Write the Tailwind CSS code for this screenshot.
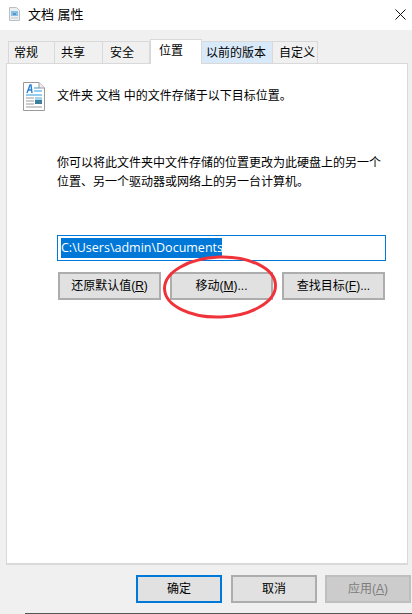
<!DOCTYPE html>
<html lang="zh-CN">
<head>
<meta charset="utf-8">
<script src="https://cdn.jsdelivr.net/npm/@tailwindcss/browser@4"></script>
</head>
<body class="relative w-[412px] h-[614px] overflow-hidden bg-[#f0f0f0] text-[12px] text-black font-['Liberation_Sans','Noto_Sans_CJK_SC',sans-serif]">
  <header class="h-[30px] bg-white flex items-center pl-[9px] pr-[6px] pb-[2px]">
    <svg class="w-[11px] h-[14px] mr-[8px]" viewBox="0 0 11 14"><path d="M.5.500H7.500L10.500 3.500V13.500H.5Z" fill="#eceef0" stroke="#bcbfc2"/><path d="M2 4h7v5H2z" fill="#86c1ea"/><path d="M4 7h3" stroke="#38668f"/><path d="M2 11h7" stroke="#c5c9cc"/></svg>
    <span class="text-[13px] leading-none">文档 属性</span>
    <svg class="ml-auto w-[11px] h-[11px]" viewBox="0 0 11 11"><path d="M.5.500l10 10M10.500.500l-10 10" stroke="#111" fill="none"/></svg>
  </header>

  <div class="pl-[8px] pt-[9px] h-[33px] flex items-end">
    <div class="w-[47px] h-[22px] bg-[#f0f0f0] border border-b-0 border-[#d9d9d9] flex items-center pl-[5px]">常规</div>
    <div class="w-[48px] h-[22px] bg-[#f0f0f0] border border-l-0 border-b-0 border-[#d9d9d9] flex items-center pl-[6px]">共享</div>
    <div class="w-[47px] h-[22px] bg-[#f0f0f0] border border-l-0 border-b-0 border-[#d9d9d9] flex items-center pl-[7px]">安全</div>
    <div class="relative z-10 w-[52px] h-[25px] -mb-px bg-white border border-b-0 border-[#d9d9d9] flex items-center pl-[8px] pb-[2px]">位置</div>
    <div class="w-[70px] h-[22px] bg-[#d8eaf9] border-t border-[#d9d9d9] flex items-center pl-[4px]">以前的版本</div>
    <div class="w-[46px] h-[22px] bg-[#f0f0f0] border border-b-0 border-[#d9d9d9] flex items-center pl-[6px]">自定义</div>
  </div>

  <main class="ml-[6px] w-[402px] h-[502px] bg-white border-2 border-[#d9d9d9] border-l-[1px] border-r-[1px] border-t-[1px] pl-[50px] pr-[21px]">
    <div class="flex items-center h-[32px] mt-[16px] -ml-[34px]">
      <svg class="w-[22px] h-[29px] mr-[12px]" viewBox="0 0 22 29">
        <path d="M.5.500H16L21.500 6V28.500H.5Z" fill="#fff" stroke="#9a9a9a"/>
        <path d="M16 .5V6H21.500" fill="#eee" stroke="#9a9a9a"/>
        <path d="M4 11 7 3h1l1 8M5 8h3" fill="none" stroke="#2a7fd5" stroke-width="1.400"/>
        <path d="M11 6h5M11 9h8M3 13h16" stroke="#2a9be0"/>
        <path d="M3 16h8M3 19h8M3 22h8M3 25h16" stroke="#9a9a9a"/>
        <path d="M12 15h7v7h-7z" fill="#3e7f9e"/><path d="M12 15h7v3h-7z" fill="#a8d4ee"/>
      </svg>
      <p>文件夹 文档 中的文件存储于以下目标位置。</p>
    </div>
    <p class="mt-[42px] leading-[19px]">你可以将此文件夹中文件存储的位置更改为此硬盘上的另一个<br>位置、另一个驱动器或网络上的另一台计算机。</p>
    <div class="mt-[43px] h-[26px] w-[329px] border border-[#0078d7] flex items-center pl-[3px]">
      <span class="bg-[#0078d7] text-white h-[20px] leading-[20px] text-[12.500px] font-['Open_Sans','Noto_Sans',sans-serif] w-[161px] whitespace-nowrap overflow-hidden">C:\Users\admin\Documents</span>
    </div>
    <div class="mt-[11px] flex gap-[9px] w-[328px] ml-px">
      <button class="w-[103px] h-[28px] bg-[#e1e1e1] border-2 border-[#adadad]">还原默认值(<u>R</u>)</button>
      <button class="w-[103px] h-[28px] bg-[#e1e1e1] border-2 border-[#adadad]">移动(<u>M</u>)...</button>
      <button class="w-[103px] h-[28px] bg-[#e1e1e1] border-2 border-[#adadad]">查找目标(<u>F</u>)...</button>
    </div>
  </main>

  <footer class="mt-[10px] flex gap-[9px] pl-[136px]">
    <button class="w-[86px] h-[28px] bg-[#e1e1e1] border-2 border-[#0078d7]">确定</button>
    <button class="w-[86px] h-[28px] bg-[#e1e1e1] border-2 border-[#adadad]">取消</button>
    <button class="w-[86px] h-[28px] -ml-px bg-[#cccccc] border-2 border-[#bfbfbf] text-[#7d7d7d]">应用(<u>A</u>)</button>
  </footer>

  <div class="absolute left-[25px] right-0 bottom-0 h-px bg-[#555]"></div>

  <svg class="absolute left-0 top-0 pointer-events-none" width="412" height="614" viewBox="0 0 412 614">
    <ellipse cx="220" cy="287" rx="55.500" ry="30" transform="rotate(-2 220 287)" fill="none" stroke="#f0333a" stroke-width="3"/>
  </svg>
</body>
</html>
